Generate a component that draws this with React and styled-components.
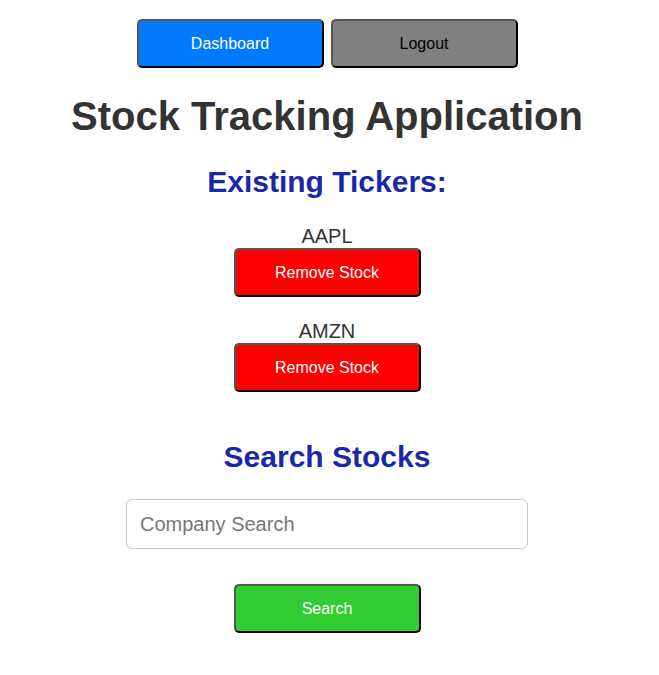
import React from 'react';
import styled, { createGlobalStyle } from 'styled-components';

const GlobalStyle = createGlobalStyle`
  body {
    margin: 0;
    background: #fff;
    font-family: "Liberation Sans", Arial, sans-serif;
    color: #333;
  }
`;

const Page = styled.div`
  display: flex;
  flex-direction: column;
  align-items: center;
  padding: 19px 5px 0 0;
`;

const Nav = styled.nav`
  display: flex;
  gap: 7px;
`;

const Button = styled.button`
  width: ${(p) => p.$width || 187}px;
  height: 49px;
  border: 2px solid;
  border-color: #555 #000 #000 #555;
  border-radius: 5px;
  background: ${(p) => p.$bg};
  color: ${(p) => p.$color || '#fff'};
  font-family: "Liberation Sans", Arial, sans-serif;
  font-size: 16px;
  cursor: pointer;
`;

const Title = styled.h1`
  margin: 26px 0 0;
  font-size: 40px;
  font-weight: bold;
  color: #333;
  line-height: 44px;
`;

const SectionHeading = styled.h2`
  margin: ${(p) => p.$mt}px 0 0;
  font-size: 30px;
  font-weight: bold;
  color: #1a28a8;
  line-height: 36px;
`;

const TickerList = styled.ul`
  list-style: none;
  margin: 24px 0 0;
  padding: 0;
  display: flex;
  flex-direction: column;
  align-items: center;
  gap: 22px;
`;

const TickerItem = styled.li`
  display: flex;
  flex-direction: column;
  align-items: center;
`;

const Symbol = styled.span`
  font-size: 20px;
  line-height: 24px;
  color: #333;
`;

const SearchInput = styled.input`
  box-sizing: border-box;
  width: 402px;
  height: 50px;
  margin-top: 24px;
  padding: 0 13px;
  border: 1px solid #ccc;
  border-radius: 6px;
  font-family: "Liberation Sans", Arial, sans-serif;
  font-size: 20px;
  color: #333;
  outline: none;

  &::placeholder {
    color: #777;
  }
`;

const SearchButton = styled(Button)`
  margin-top: 35px;
`;

const tickers = ['AAPL', 'AMZN'];

export default function App() {
  return (
    <>
      <GlobalStyle />
      <Page>
        <Nav>
          <Button $bg="#007bff">Dashboard</Button>
          <Button $bg="#808080" $color="#000">Logout</Button>
        </Nav>
        <Title>Stock Tracking Application</Title>
        <SectionHeading $mt={26}>Existing Tickers:</SectionHeading>
        <TickerList>
          {tickers.map((t) => (
            <TickerItem key={t}>
              <Symbol>{t}</Symbol>
              <Button $bg="#ff0000">Remove Stock</Button>
            </TickerItem>
          ))}
        </TickerList>
        <SectionHeading $mt={47}>Search Stocks</SectionHeading>
        <SearchInput type="text" placeholder="Company Search" />
        <SearchButton $bg="#32cd32">Search</SearchButton>
      </Page>
    </>
  );
}
